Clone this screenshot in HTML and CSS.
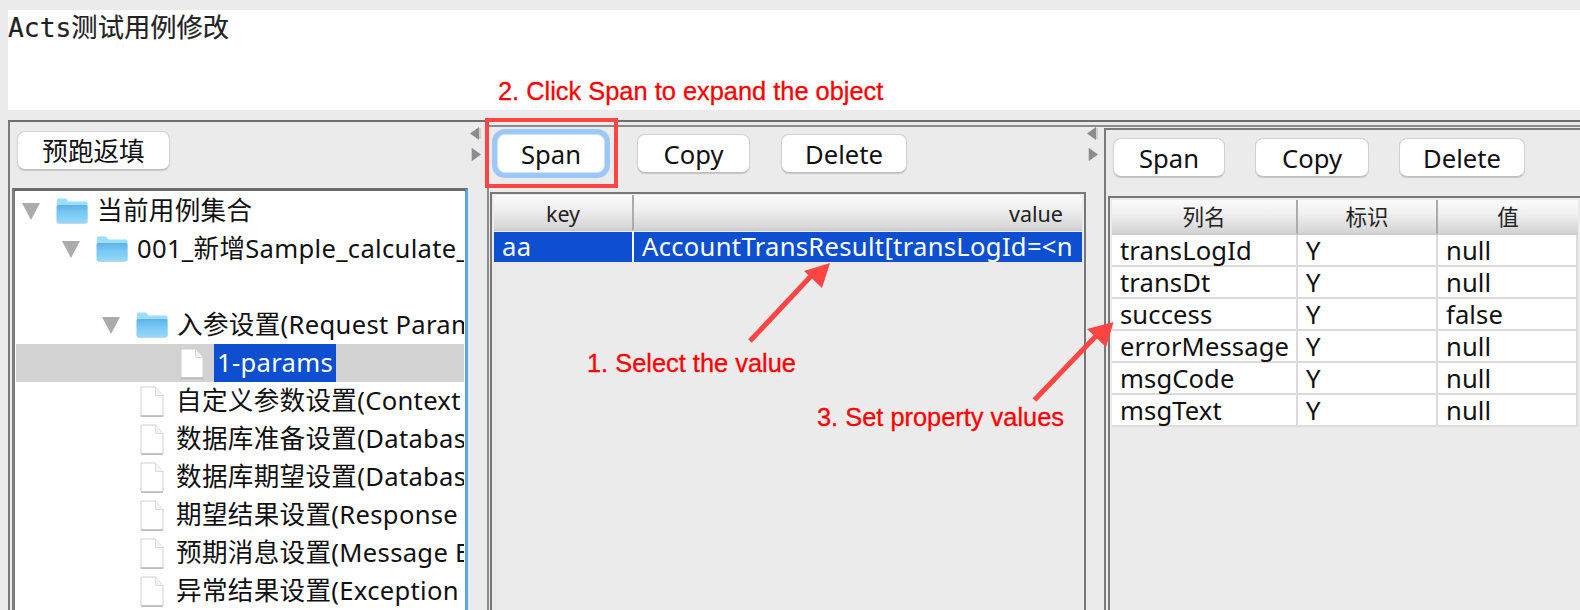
FILE: index.html
```html
<!DOCTYPE html>
<html lang="zh">
<head>
<meta charset="utf-8">
<title>Acts测试用例修改</title>
<link rel="stylesheet" href="styles.css">
</head>
<body>
<svg class="defs" width="0" height="0" aria-hidden="true">
  <defs>
    <linearGradient id="folderFront" x1="0" y1="0" x2="0" y2="1">
      <stop offset="0" stop-color="#5eb2e6"/>
      <stop offset="0.35" stop-color="#74c4f2"/>
      <stop offset="1" stop-color="#93d9fc"/>
    </linearGradient>
    <symbol id="twisty" viewBox="0 0 18 17"><path d="M0 0H18L9 17Z" fill="#ababab"/></symbol>
    <symbol id="folder" viewBox="0 0 32 26">
      <path d="M1 24.5V2Q1 .5 2.500 .5H10L12.500 3.500H30Q31.500 3.500 31.500 5V24.500Z" fill="#9adfff"/>
      <path d="M.5 8.500Q.5 7 2 7H30Q31.500 7 31.500 8.500V23.500Q31.500 25 30 25H2Q.5 25 .5 23.500Z" fill="url(#folderFront)"/>
      <path d="M2 25.500H30" stroke="#c9d6de" stroke-width="1"/>
    </symbol>
    <symbol id="file" viewBox="0 0 24 31">
      <path d="M1 1H15.500L23 9.500V29.500H1Z" fill="#fff" stroke="#cfcfcf" stroke-width="1"/>
      <path d="M15.500 1V9.500H23" fill="#f4f4f4" stroke="#dcdcdc" stroke-width="1"/>
      <path d="M1 30.300H23" stroke="#b5b5b5" stroke-width="1.200"/>
    </symbol>
    <symbol id="splitLeft" viewBox="0 0 11 13"><path d="M0 6.500L9 0V13Z" fill="#8c8c8c"/><path d="M9 1H11V12H9Z" fill="#cfcfcf"/></symbol>
    <symbol id="splitRight" viewBox="0 0 11 13"><path d="M1 0H2V13H1Z" fill="#cfcfcf"/><path d="M2 0L11 6.500L2 13Z" fill="#8c8c8c"/></symbol>
  </defs>
</svg>

<header class="title-area"><span class="title">Acts测试用例修改</span></header>

<main class="frame">
  <section class="tree-pane">
    <div class="toolbar tree-toolbar"><button class="btn btn-fill">预跑返填</button></div>
    <div class="tree">
      <div class="tree-body">
        <div class="row lv1"><svg class="twisty"><use href="#twisty"/></svg><svg class="folder"><use href="#folder"/></svg><span class="row-text">当前用例集合</span></div>
        <div class="row lv2"><svg class="twisty"><use href="#twisty"/></svg><svg class="folder"><use href="#folder"/></svg><span class="row-text">001_新增Sample_calculate_</span></div>
        <div class="row"></div>
        <div class="row lv3"><svg class="twisty"><use href="#twisty"/></svg><svg class="folder"><use href="#folder"/></svg><span class="row-text">入参设置(Request Param</span></div>
        <div class="row row-selected"><svg class="file"><use href="#file"/></svg><span class="row-text row-text-selected">1-params</span></div>
        <div class="row leaf"><svg class="file"><use href="#file"/></svg><span class="row-text">自定义参数设置(Context</span></div>
        <div class="row leaf"><svg class="file"><use href="#file"/></svg><span class="row-text">数据库准备设置(Database</span></div>
        <div class="row leaf"><svg class="file"><use href="#file"/></svg><span class="row-text">数据库期望设置(Database</span></div>
        <div class="row leaf"><svg class="file"><use href="#file"/></svg><span class="row-text">期望结果设置(Response</span></div>
        <div class="row leaf"><svg class="file"><use href="#file"/></svg><span class="row-text">预期消息设置(Message E</span></div>
        <div class="row leaf"><svg class="file"><use href="#file"/></svg><span class="row-text">异常结果设置(Exception</span></div>
      </div>
    </div>
  </section>

  <div class="splitter splitter-outer">
    <svg class="split-arrow"><use href="#splitLeft"/></svg>
    <svg class="split-arrow"><use href="#splitRight"/></svg>
  </div>

  <div class="nested">
    <section class="mid-pane">
      <div class="toolbar mid-toolbar">
        <button class="btn btn-span btn-focus">Span</button>
        <button class="btn btn-copy">Copy</button>
        <button class="btn btn-delete">Delete</button>
      </div>
      <div class="table-box mid-box">
        <div class="mid-grid">
          <div class="head head-center">key</div>
          <div class="head head-right">value</div>
          <div class="sel-cell sel-key">aa</div>
          <div class="sel-cell sel-value">AccountTransResult[transLogId=&lt;n</div>
        </div>
      </div>
    </section>

    <div class="splitter splitter-inner">
      <svg class="split-arrow"><use href="#splitLeft"/></svg>
      <svg class="split-arrow"><use href="#splitRight"/></svg>
    </div>

    <section class="right-pane">
      <div class="toolbar right-toolbar">
        <button class="btn btn-span-r">Span</button>
        <button class="btn btn-copy-r">Copy</button>
        <button class="btn btn-delete-r">Delete</button>
      </div>
      <div class="table-box right-box">
        <div class="prop-grid">
          <div class="head head-center">列名</div><div class="head head-center">标识</div><div class="head head-center">值</div>
          <div class="cell">transLogId</div><div class="cell">Y</div><div class="cell">null</div>
          <div class="cell">transDt</div><div class="cell">Y</div><div class="cell">null</div>
          <div class="cell">success</div><div class="cell">Y</div><div class="cell">false</div>
          <div class="cell">errorMessage</div><div class="cell">Y</div><div class="cell">null</div>
          <div class="cell">msgCode</div><div class="cell">Y</div><div class="cell">null</div>
          <div class="cell">msgText</div><div class="cell">Y</div><div class="cell">null</div>
        </div>
      </div>
    </section>
  </div>
</main>

<div class="callout-box"></div>
<svg class="arrows" viewBox="0 0 1580 610" aria-hidden="true">
  <path class="arrow-line" d="M750 341L812 275"/>
  <path class="arrow-head" d="M830 263L804 271L822 288Z"/>
  <path class="arrow-line" d="M1034.500 400L1096 336"/>
  <path class="arrow-head" d="M1113.600 322L1087 329L1106 347Z"/>
</svg>
<span class="note note-span">2. Click Span to expand the object</span>
<span class="note note-select">1. Select the value</span>
<span class="note note-set">3. Set property values</span>
</body>
</html>
```

FILE: styles.css
```css
* { box-sizing: border-box; }

html, body {
  margin: 0;
  height: 610px;
  overflow: hidden;
}

body {
  position: relative;
  padding-top: 10px;
  background: #ebebeb;
  color: #111;
  font-family: "Noto Sans", "Noto Sans CJK SC", sans-serif;
  font-size: 25.6px;
}

.defs { position: absolute; }

.title-area {
  height: 100px;
  margin-left: 8px;
  background: #fff;
}

.title {
  display: block;
  padding-top: 1px;
  font-family: "DejaVu Sans Mono", "Noto Sans CJK SC", monospace;
  font-size: 26.3px;
  line-height: 34px;
  color: #222;
  -webkit-text-stroke: .2px #222;
}

.frame {
  display: flex;
  height: 490px;
  margin: 10px 0 0 8px;
  border-top: 2px solid #6e6e6e;
  border-left: 2px solid #7a7a7a;
}

.tree-pane {
  flex: 0 0 460px;
  min-width: 0;
}

.toolbar { display: flex; align-items: center; }

.tree-toolbar { padding: 9px 0 0 7px; }

.btn {
  height: 39px;
  padding: 2px 0 0;
  border: 1px solid #d2d2d2;
  border-bottom-color: #bdbdbd;
  border-radius: 8px;
  background: #fff;
  box-shadow: 0 1px 1px rgba(0, 0, 0, .15);
  color: #111;
  font: inherit;
  font-size: 25.6px;
  line-height: 1;
}

.btn-fill { width: 153px; }

.tree {
  height: 450px;
  margin: 18px 0 0 2px;
  width: 456px;
  border-top: 3px solid #6b6b6b;
  border-left: 3px solid #7d7d7d;
  border-right: 3px solid #5aa5ea;
  background: #fff;
  padding-left: 1px;
}

.tree-body { width: 448px; overflow: hidden; padding-top: 1px; }

.row {
  display: flex;
  align-items: center;
  height: 38px;
  white-space: nowrap;
  overflow: hidden;
  letter-spacing: .3px;
}

.row-text { flex: none; line-height: 38px; }

.twisty { flex: none; width: 18px; height: 17px; margin-right: 16px; }
.folder { flex: none; width: 32px; height: 26px; margin-right: 9px; }
.file { flex: none; width: 24px; height: 31px; margin-right: 12px; }

.lv1 { padding-left: 6px; }
.lv2 { padding-left: 46px; }
.lv3 { padding-left: 86px; }
.leaf { padding-left: 124px; }

.row-selected { padding-left: 164px; background: #d2d2d2; }
.row-selected .file { margin-right: 10px; }

.row-text-selected {
  padding: 0 3px;
  background: #0d4fd0;
  color: #fff;
}

.splitter {
  display: flex;
  flex-direction: column;
  gap: 8px;
}

.splitter-outer { flex: 0 0 17px; padding: 5px 0 0; }
.splitter-inner { flex: 0 0 18px; padding: 0 0 0 1px; }

.split-arrow { flex: none; width: 11px; height: 13px; }

.nested {
  flex: 1;
  display: flex;
  min-width: 0;
  margin-top: 3px;
  border-top: 2px solid #8a8a8a;
}

.mid-pane {
  flex: 0 0 599px;
  border-left: 2px solid #8a8a8a;
}

.mid-toolbar { padding: 7px 0 0 8px; }

.btn-span { width: 108px; }
.btn-focus {
  border-color: #cfe2fa;
  box-shadow: 0 0 0 5px #9cc8f8;
}
.btn-copy { width: 113px; margin-left: 32px; }
.btn-delete { width: 126px; margin-left: 31px; }

.table-box {
  border-top: 2px solid #777;
  border-left: 2px solid #777;
}

.mid-box {
  height: 420px;
  margin: 19px 0 0 1px;
  border-right: 2px solid #777;
  padding: 1px 2px 0;
}

.mid-grid {
  display: grid;
  grid-template-columns: 138px 450px;
  grid-template-rows: 36px 30px;
  row-gap: 1px;
}

.head {
  background: linear-gradient(#fbfbfb 0%, #f0f0f0 40%, #d4d4d4 100%);
  border-bottom: 2px solid #cdcdcd;
  font-size: 21.5px;
  line-height: 34px;
  color: #222;
}

.mid-grid .head { padding-top: 2px; line-height: 33px; }

.head-center { text-align: center; }
.head-right { text-align: right; padding-right: 19px; border-left: 2px solid #ababab; }

.sel-cell {
  background: #0d4fd0;
  color: #fff;
  line-height: 30px;
  white-space: nowrap;
  overflow: hidden;
  letter-spacing: .3px;
}

.sel-key { padding-left: 8px; }
.sel-value { padding-left: 8px; border-left: 2px solid #fff; }

.right-pane {
  flex: 1;
  min-width: 0;
  margin-top: 1px;
  border-top: 2px solid #7a7a7a;
  border-left: 2px solid #7a7a7a;
}

.right-toolbar { padding: 8px 0 0 7px; }

.btn-span-r { width: 112px; }
.btn-copy-r { width: 114px; margin-left: 30px; }
.btn-delete-r { width: 126px; margin-left: 30px; }

.right-box {
  height: 420px;
  margin: 19px 0 0 2px;
  padding: 2px 0 0 2px;
}

.prop-grid {
  display: grid;
  grid-template-columns: 186px 140px 140px;
  grid-auto-rows: 32px;
  grid-template-rows: 35px;
}

.prop-grid .head { border-right: 2px solid #ababab; border-bottom-width: 2px; }
.prop-grid .head:nth-child(3) { border-right: 0; }

.cell {
  padding-left: 8px;
  background: #fff;
  border-right: 2px solid #dcdcdc;
  border-bottom: 2px solid #dcdcdc;
  line-height: 31px;
  white-space: nowrap;
  letter-spacing: .1px;
}

.callout-box {
  position: absolute;
  left: 485px;
  top: 118px;
  width: 133px;
  height: 70px;
  border: 4px solid #ff4444;
}

.arrows {
  position: absolute;
  left: 0;
  top: 0;
  width: 1580px;
  height: 610px;
  pointer-events: none;
}

.arrow-line { fill: none; stroke: #ff4444; stroke-width: 5; }
.arrow-head { fill: #ff4444; }

.note {
  position: absolute;
  font-family: "Liberation Sans", Arial, sans-serif;
  font-size: 25.4px;
  line-height: 28px;
  color: #f00;
  white-space: nowrap;
  -webkit-text-stroke: .3px #f00;
}

.note-span { left: 498px; top: 77px; }
.note-select { left: 587px; top: 349px; }
.note-set { left: 817px; top: 403px; }
```
